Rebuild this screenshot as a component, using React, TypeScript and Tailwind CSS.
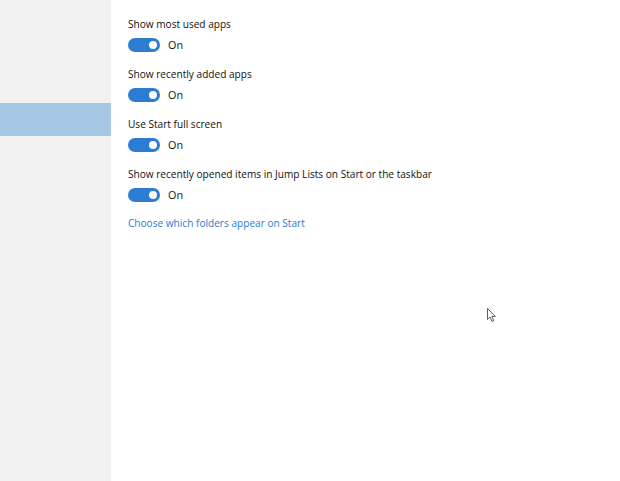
import React from "react";

function Toggle() {
  return (
    <div className="flex items-center h-[14px] mt-[7px]">
      <div className="relative w-[31.5px] h-[14px] rounded-full bg-[#2b7cd3]">
        <div className="absolute right-[3px] top-[3px] w-[8px] h-[8px] rounded-full bg-white" />
      </div>
      <span className="ml-[8.5px] text-[10.8px] text-[#111] leading-none">On</span>
    </div>
  );
}

function Setting({ label }: { label: string }) {
  return (
    <div className="flex flex-col h-[50px]">
      <div className="text-[10.1px] leading-[14px] text-[#111]">{label}</div>
      <Toggle />
    </div>
  );
}

export default function App() {
  return (
    <div
      className="relative flex w-[620px] h-[481px] bg-white overflow-hidden"
      style={{ fontFamily: '"Open Sans", "Noto Sans", sans-serif' }}
    >
      <div className="w-[111px] h-full bg-[#f2f2f2] flex flex-col">
        <div className="h-[103px]" />
        <div className="h-[33px] bg-[#a6c8e6]" />
      </div>
      <div className="flex-1 pl-[17px] pt-[17px] flex flex-col">
        <Setting label="Show most used apps" />
        <Setting label="Show recently added apps" />
        <Setting label="Use Start full screen" />
        <Setting label="Show recently opened items in Jump Lists on Start or the taskbar" />
        <div className="text-[10.1px] leading-[14px] text-[#2a7cd0] -mt-[1px]">
          Choose which folders appear on Start
        </div>
      </div>
      <svg
        className="absolute left-[487px] top-[308px]"
        width="10"
        height="15"
        viewBox="0 0 10 15"
      >
        <path
          d="M0.5 0.5 L0.5 11.5 L3 9 L5 13.5 L6.8 12.7 L4.8 8.4 L8.3 8.4 Z"
          fill="white"
          stroke="#333"
          strokeWidth="0.8"
          strokeLinejoin="round"
        />
      </svg>
    </div>
  );
}
